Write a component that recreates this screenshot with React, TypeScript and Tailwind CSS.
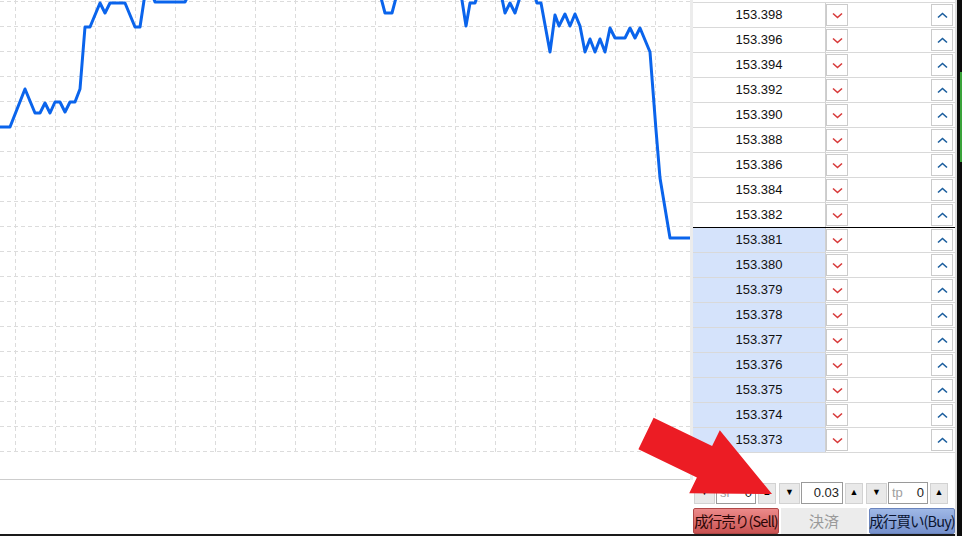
import React from "react";

const linePts: [number, number][] = [
    [0, 127], [10, 127], [25, 89], [35, 113], [40, 113], [45, 103], [50, 113], [55, 102], [60, 102],
    [65, 112], [70, 102], [75, 102], [80, 89], [85, 27], [90, 27], [100, 3], [105, 13], [110, 3],
    [125, 3], [135, 27], [140, 27], [145, -6], [152, -6], [155, 2], [185, 2], [189, -6],
    [380, -6], [385, 13], [392, 13], [397, -6], [461, -6], [466, 26], [470, 3], [475, 3], [478, -6],
    [501, -6], [505, 13], [510, 3], [515, 13], [521, -6], [534, -6], [537, 3], [541, 3], [550, 52],
    [555, 15], [559, 26], [565, 14], [570, 26], [575, 14], [580, 26], [585, 52], [590, 39], [595, 52],
    [600, 39], [605, 52], [610, 28], [615, 38], [625, 38], [630, 28], [635, 38], [640, 28], [650, 52],
    [656, 130], [660, 178], [670, 238], [692, 238],
];

const asks = ["153.398", "153.396", "153.394", "153.392", "153.390", "153.388", "153.386", "153.384", "153.382"];
const bids = ["153.381", "153.380", "153.379", "153.378", "153.377", "153.376", "153.375", "153.374", "153.373"];

function Chart() {
    const vx = Array.from({ length: 17 }, (_, i) => 15 + i * 40);
    const hy = Array.from({ length: 19 }, (_, i) => 1.5 + i * 25);
    return (
        <svg width="690" height="479" className="block">
            {vx.map((x) => (
                <line key={"v" + x} x1={x + 0.5} y1={0} x2={x + 0.5} y2={452} stroke="#dcdcdc" strokeDasharray="4 3" />
            ))}
            {hy.map((y) => (
                <line key={"h" + y} x1={0} y1={y} x2={690} y2={y} stroke="#dcdcdc" strokeDasharray="4 3" />
            ))}
            <polyline
                points={linePts.map((p) => p.join(",")).join(" ")}
                fill="none"
                stroke="#0a64ec"
                strokeWidth={3}
                strokeLinejoin="round"
            />
        </svg>
    );
}

function DownBtn() {
    return (
        <div className="w-[22px] h-[22px] border border-[#cbcbcb] bg-white flex items-center justify-center">
            <svg width="11" height="7" viewBox="0 0 11 7">
                <path d="M1 1.5 L5.5 5.5 L10 1.5" fill="none" stroke="#d83a3a" strokeWidth="1.6" />
            </svg>
        </div>
    );
}

function UpBtn() {
    return (
        <div className="w-[22px] h-[22px] border border-[#cbcbcb] bg-white flex items-center justify-center">
            <svg width="11" height="7" viewBox="0 0 11 7">
                <path d="M1 5.5 L5.5 1.5 L10 5.5" fill="none" stroke="#1b5e9e" strokeWidth="1.6" />
            </svg>
        </div>
    );
}

function Row({ price, bid, last }: { price: string; bid?: boolean; last?: boolean }) {
    return (
        <div className={"flex h-[25px] border-b " + (last ? "border-black" : "border-[#d9d9d9]")}>
            <div
                className={
                    "w-[133px] border-r border-[#d0d0d0] flex items-center justify-center text-[13px] text-[#111] " +
                    (bid ? "bg-[#d5e3fb]" : "bg-white")
                }
            >
                {price}
            </div>
            <div className="flex-1 flex items-center">
                <DownBtn />
                <div className="flex-1" />
                <UpBtn />
                <div className="w-[2px]" />
            </div>
        </div>
    );
}

function Spin({ label, value, w }: { label?: string; value: string; w: number }) {
    return (
        <div className="flex items-center h-[22px]">
            <div className="w-[21px] h-[21px] bg-[#e9e9e9] border border-[#d2d2d2] flex items-center justify-center text-[9px] text-black">
                ▼
            </div>
            <div
                className="h-[22px] ml-[1px] bg-white border border-[#9a9a9a] flex items-center justify-between px-[3px] text-[13px]"
                style={{ width: w }}
            >
                <span className="text-[#a0a0a0]">{label}</span>
                <span className="text-[#222]">{value}</span>
            </div>
            <div className="w-[18px] h-[21px] ml-[2px] bg-[#e9e9e9] border border-[#d2d2d2] flex items-center justify-center text-[9px] text-black">
                ▲
            </div>
        </div>
    );
}

export default function App() {
    return (
        <div className="w-[962px] h-[536px] flex bg-white relative overflow-hidden font-['Liberation_Sans','Noto_Sans_CJK_JP',sans-serif]">
            <div className="w-[955px] flex flex-col">
                <div className="flex h-[480px]">
                    <div className="w-[690px] h-[480px] border-b border-[#cdcdcd]">
                        <Chart />
                    </div>
                    <div className="w-[265px] border-l-[3px] border-[#ececec] pt-[2px]">
                        <div className="border-t border-[#d9d9d9]">
                            {asks.map((p, i) => (
                                <Row key={p} price={p} last={i === asks.length - 1} />
                            ))}
                            {bids.map((p) => (
                                <Row key={p} price={p} bid />
                            ))}
                        </div>
                    </div>
                </div>
                <div className="flex h-[54px]">
                    <div className="w-[694px]" />
                    <div className="flex-1 flex flex-col pt-[2px]">
                        <div className="flex gap-[3px] pl-[1px]">
                            <Spin label="sl" value="0" w={40} />
                            <Spin value="0.03" w={42} />
                            <Spin label="tp" value="0" w={40} />
                        </div>
                        <div className="flex gap-[2px] mt-[4px] h-[26px]">
                            <div className="w-[86px] bg-gradient-to-b from-[#ec8a8a] to-[#c95252] border border-[#b04848] rounded-[2px] flex items-center justify-center text-[14.5px] text-[#2a0505] whitespace-nowrap tracking-[-0.9px] font-['Noto_Sans_CJK_JP',sans-serif]">
                                成行売り(Sell)
                            </div>
                            <div className="w-[86px] bg-[#ececec] flex items-center justify-center text-[15px] text-[#9a9a9a] font-['Noto_Sans_CJK_JP',sans-serif]">
                                決済
                            </div>
                            <div className="w-[86px] bg-gradient-to-b from-[#9fb8e6] to-[#7590cc] border border-[#6a84bd] rounded-[2px] flex items-center justify-center text-[14.5px] text-[#0a1430] whitespace-nowrap tracking-[-0.9px] font-['Noto_Sans_CJK_JP',sans-serif]">
                                成行買い(Buy)
                            </div>
                        </div>
                    </div>
                </div>
                <div className="h-[2px] bg-[#1a1a1a]" />
            </div>
            <div className="w-[2px] bg-[#dedede]" />
            <div className="w-[5px] bg-[#0c0c0c] flex flex-col">
                <div className="h-[72px]" />
                <div className="h-[90px] ml-[3px] bg-[#3aa33a]" />
            </div>
            <svg width="962" height="536" className="absolute left-0 top-0 pointer-events-none">
                <polygon
                    points="653.6,417.75 712.1,446 719.8,430.3 772,494 689.2,493.3 696.9,477.6 638.4,449.25"
                    fill="#ec1c24"
                />
            </svg>
        </div>
    );
}
